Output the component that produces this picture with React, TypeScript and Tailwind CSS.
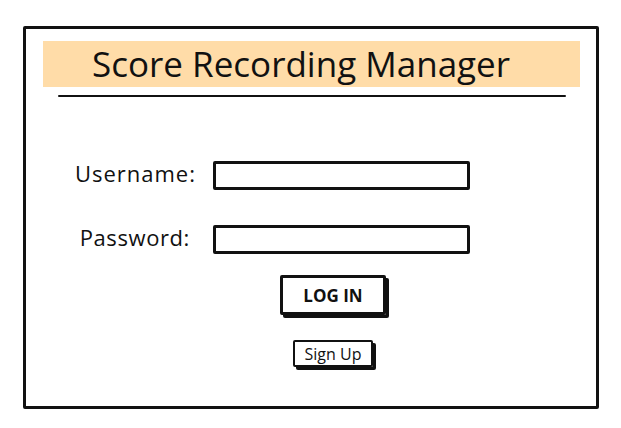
import React from "react";

export default function App() {
  return (
    <div className="w-[621px] h-[428px] bg-white overflow-hidden" style={{ fontFamily: "'Open Sans', 'Noto Sans', sans-serif" }}>
      <div className="ml-[23px] mt-[26px] w-[576px] h-[383px] border-[3px] border-[#111] rounded-[2px] flex flex-col">
        <div className="ml-[17px] mt-[12px] w-[537px] h-[46px] bg-[#ffdca8] flex items-center pl-[49px]">
          <span className="text-[35px] leading-none text-[#111] mb-[2px]">Score Recording Manager</span>
        </div>
        <div className="ml-[32px] mt-[8px] w-[508px] h-[2px] bg-[#111] rounded-full" />
        <div className="mt-[64px] flex items-center h-[29px]">
          <div className="w-[170px] mb-[6px] text-right text-[22px] tracking-[1px] text-[#111] leading-none">Username:</div>
          <div className="ml-[17px] w-[257px] h-[29px] border-[3px] border-[#111] rounded-[2px]" />
        </div>
        <div className="mt-[35px] flex items-center h-[29px]">
          <div className="w-[170px] mb-[6px] pr-[6px] text-right text-[22px] tracking-[0.6px] text-[#111] leading-none">Password:</div>
          <div className="ml-[17px] w-[257px] h-[29px] border-[3px] border-[#111] rounded-[2px]" />
        </div>
        <div className="mt-[21px] ml-[254px] w-[106px] h-[40px] border-[3px] border-[#111] rounded-[2px] shadow-[3px_3px_0_#111] flex items-center justify-center">
          <span className="text-[17px] font-bold text-[#111] leading-none">LOG IN</span>
        </div>
        <div className="mt-[25px] ml-[267px] w-[80px] h-[27px] border-[2px] border-[#111] rounded-[2px] shadow-[3px_3px_0_#111] flex items-center justify-center">
          <span className="text-[16px] text-[#111] leading-none">Sign Up</span>
        </div>
      </div>
    </div>
  );
}
